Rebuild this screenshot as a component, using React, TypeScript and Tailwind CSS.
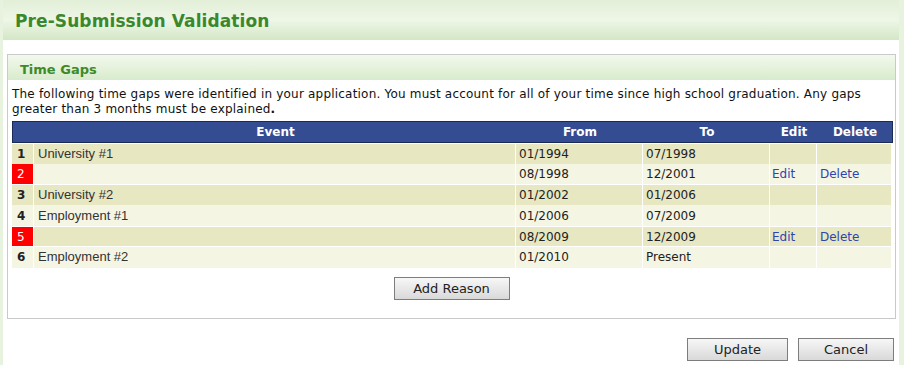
// Pre-Submission Validation – time gaps panel
const rows = [
  { n: "1", event: "University #1", from: "01/1994", to: "07/1998", gap: false, h: "h-[19px]" },
  { n: "2", event: "", from: "08/1998", to: "12/2001", gap: true, h: "h-[20px]" },
  { n: "3", event: "University #2", from: "01/2002", to: "01/2006", gap: false, h: "h-[19px]" },
  { n: "4", event: "Employment #1", from: "01/2006", to: "07/2009", gap: false, h: "h-[21px]" },
  { n: "5", event: "", from: "08/2009", to: "12/2009", gap: true, h: "h-[19px]" },
  { n: "6", event: "Employment #2", from: "01/2010", to: "Present", gap: false, h: "h-[19px]" },
];

const verdana = "font-['DejaVu_Sans',Verdana,sans-serif]";
const cols = "grid grid-cols-[21px_481px_126px_126px_46px_74px] gap-x-px";

function Button({ label, className }: { label: string; className: string }) {
  return (
    <button
      className={`${className} h-[23px] border border-[#7d7d7d] bg-gradient-to-b from-[#f7f7f7] to-[#d9d9d9] text-[13px] text-[#222] ${verdana}`}
    >
      {label}
    </button>
  );
}

export default function App() {
  return (
    <div className={`w-[904px] h-[365px] overflow-hidden bg-white border-l-[3px] border-r-[5px] border-[#e8f3df] ${verdana}`}>
      <div className="h-[40px] -ml-[3px] bg-gradient-to-b from-[#e3efd8] via-[#eef6e7] to-[#d3e7c5] pl-[15px] pt-[9px]">
        <h1 className="text-[17px] font-bold text-[#3b882c] tracking-[0.1px]">Pre-Submission Validation</h1>
      </div>

      <div className="ml-[4px] mt-[14px] w-[889px] h-[265px] border border-[#c9c9c9]">
        <div className="h-[25px] bg-gradient-to-b from-[#f3f9ee] to-[#d8ebcc] pl-[12px] pt-[5px] text-[13px] font-bold text-[#3e8a2b]">
          Time Gaps
        </div>
        <p className="px-[4px] pt-[7px] text-[12px] leading-[15px] text-[#111] tracking-[0.2px]">
          The following time gaps were identified in your application. You must account for all of your time since high school graduation. Any gaps
          <br />
          greater than 3 months must be explained<span className="font-bold">.</span>
        </p>

        <div className="ml-[4px] mt-[4px] w-[881px]">
          <div className={`${cols} h-[22px] items-center bg-[#344c91] border border-[#1c2a58] text-[12px] font-bold text-white`}>
            <span />
            <span className="text-center">Event</span>
            <span className="text-center">From</span>
            <span className="text-center">To</span>
            <span className="text-center">Edit</span>
            <span className="text-center">Delete</span>
          </div>
          <div className="flex flex-col gap-y-px pt-px">
            {rows.map((r, i) => {
              const bg = i % 2 === 0 ? "bg-[#e7e7c2]" : "bg-[#f5f5e4]";
              return (
                <div key={r.n} className={`${cols} ${r.h} text-[12px] text-[#222]`}>
                  <span
                    className={`pl-[5px] flex items-center ${r.gap ? "bg-[#ff0000] text-white" : `${bg} font-bold text-[#222]`}`}
                  >
                    {r.n}
                  </span>
                  <span className={`${bg} pl-[4px] flex items-end pb-px font-['Liberation_Sans',Arial,sans-serif] text-[13px] text-[#333]`}>
                    {r.event}
                  </span>
                  <span className={`${bg} pl-[3px] flex items-center`}>{r.from}</span>
                  <span className={`${bg} pl-[3px] flex items-center`}>{r.to}</span>
                  <span className={`${bg} pl-[2px] flex items-center text-[#2f43b3]`}>{r.gap ? "Edit" : ""}</span>
                  <span className={`${bg} pl-[3px] flex items-center text-[#2f43b3]`}>{r.gap ? "Delete" : ""}</span>
                </div>
              );
            })}
          </div>
        </div>

        <div className="flex justify-center pt-[11px]">
          <Button label="Add Reason" className="w-[116px]" />
        </div>
      </div>

      <div className="flex justify-end gap-[10px] pr-[5px] pt-[19px]">
        <Button label="Update" className="w-[101px]" />
        <Button label="Cancel" className="w-[96px]" />
      </div>
    </div>
  );
}
